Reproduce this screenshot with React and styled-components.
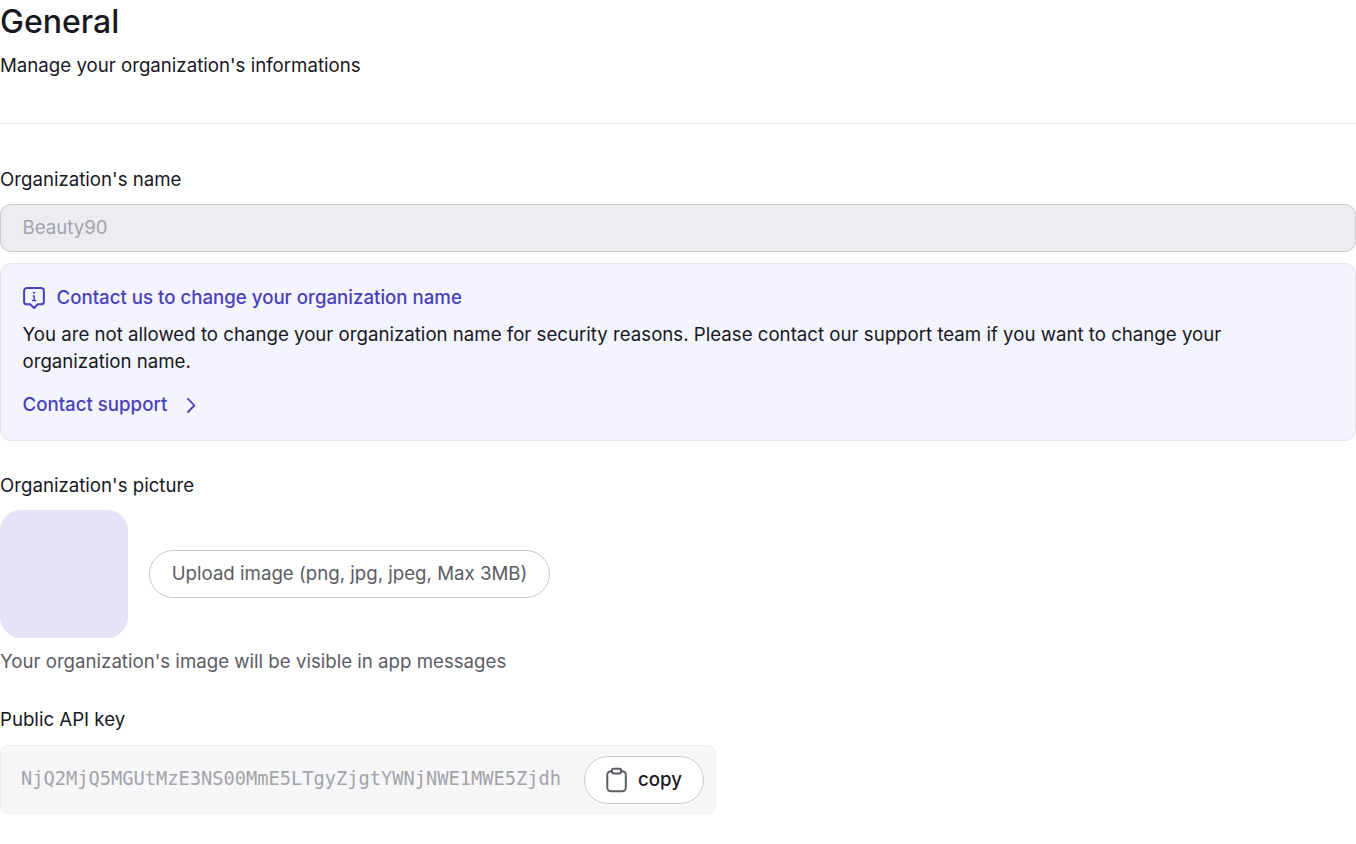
import React from "react";
import styled, { createGlobalStyle } from "styled-components";

const apiKey = "NjQ2MjQ5MGUtMzE3NS00MmE5LTgyZjgtYWNjNWE1MWE5Zjdh";

export default function App() {
  return (
    <Container>
      <GlobalStyle />
      <Header>
        <Title>General</Title>
        <Subtitle>Manage your organization's informations</Subtitle>
      </Header>

      <Section>
        <Label htmlFor="name">Organization's name</Label>
        <NameInput id="name" value="Beauty90" disabled readOnly />
        <Notice>
          <NoticeTitle>
            <InfoIcon />
            Contact us to change your organization name
          </NoticeTitle>
          <NoticeText>
            You are not allowed to change your organization name for security reasons. Please
            contact our support team if you want to change your organization name.
          </NoticeText>
          <SupportLink href="#">
            Contact support
            <ChevronIcon />
          </SupportLink>
        </Notice>
      </Section>

      <Section $top={31}>
        <Label as="div">Organization's picture</Label>
        <PictureRow>
          <Picture />
          <UploadButton>Upload image (png, jpg, jpeg, Max 3MB)</UploadButton>
        </PictureRow>
        <Hint>Your organization's image will be visible in app messages</Hint>
      </Section>

      <Section $top={31}>
        <Label as="div">Public API key</Label>
        <KeyBox>
          <KeyText>{apiKey}</KeyText>
          <CopyButton>
            <ClipboardIcon />
            copy
          </CopyButton>
        </KeyBox>
      </Section>
    </Container>
  );
}

function InfoIcon() {
  return (
    <Icon width="23" height="24" viewBox="0 0 23 24">
      <path d="M4 2.1h14a2.9 2.9 0 0 1 2.9 2.9v10.4a2.9 2.9 0 0 1-2.9 2.9h-3.1L11 22l-3.9-3.7H4a2.9 2.9 0 0 1-2.9-2.9V5A2.9 2.9 0 0 1 4 2.1z" />
      <path d="M10.1 9.9h1.1v4.5M9.7 14.5h3" strokeWidth="1.4" />
      <circle cx="11" cy="6.8" r="1.1" fill="currentColor" stroke="none" />
    </Icon>
  );
}

function ChevronIcon() {
  return (
    <Icon width="12" height="18" viewBox="0 0 12 18">
      <path d="M3 2.8 9.4 9.5 3 16" strokeWidth="1.8" />
    </Icon>
  );
}

function ClipboardIcon() {
  return (
    <Icon width="22" height="26" viewBox="0 0 22 26">
      <path d="M7 4.200H6a3.700 3.700 0 0 0-3.700 3.700v12.700A3.700 3.700 0 0 0 6 24.300h11.100a3.700 3.700 0 0 0 3.700-3.700V7.900a3.700 3.700 0 0 0-3.700-3.700h-1" />
      <rect x="6.900" y="1.700" width="9.300" height="4.700" rx="1.800" />
    </Icon>
  );
}

const GlobalStyle = createGlobalStyle`
  * {
    box-sizing: border-box;
  }
  body {
    margin: 0;
    background: #fff;
    color: #18181f;
    font-family: Inter, "Liberation Sans", sans-serif;
    font-size: 18.67px;
    line-height: 27px;
  }
`;

const Container = styled.main`
  width: 100%;
`;

const Header = styled.header`
  height: 124px;
  border-bottom: 1px solid #ebebef;
`;

const Title = styled.h1`
  margin: 0;
  font-size: 32px;
  font-weight: 500;
  line-height: 43px;
`;

const Subtitle = styled.p`
  margin: 9px 0 0;
`;

const Section = styled.section`
  display: flex;
  flex-direction: column;
  align-items: flex-start;
  margin-top: ${({ $top }) => $top || 42}px;
`;

const Label = styled.label`
  display: block;
  line-height: 27px;
`;

const NameInput = styled.input`
  width: 100%;
  height: 48px;
  margin-top: 11px;
  padding: 0 21.5px 1px;
  border: 1px solid #c9c9cf;
  border-radius: 11px;
  background: #edecf1;
  color: #a3a3a9;
  font: inherit;
`;

const Notice = styled.div`
  width: 100%;
  height: 178px;
  margin-top: 11px;
  padding: 20px 100px 0 21.5px;
  border: 1px solid #e4e4f0;
  border-radius: 11px;
  background: #f3f4fd;
`;

const NoticeTitle = styled.div`
  display: flex;
  align-items: center;
  gap: 11px;
  color: #4b40bd;
  font-weight: 500;
`;

const NoticeText = styled.p`
  margin: 10px 0 0;
`;

const SupportLink = styled.a`
  display: inline-flex;
  align-items: center;
  gap: 18px;
  margin-top: 16px;
  color: #4b40bd;
  font-weight: 500;
  text-decoration: none;
`;

const PictureRow = styled.div`
  display: flex;
  align-items: center;
  gap: 21px;
  margin-top: 11px;
`;

const Picture = styled.div`
  width: 128px;
  height: 128px;
  border-radius: 21px;
  background: #e5e4f7;
`;

const Button = styled.button`
  display: flex;
  align-items: center;
  justify-content: center;
  height: 48px;
  border: 1px solid #c9c9cf;
  border-radius: 24px;
  background: #fff;
  font: inherit;
`;

const UploadButton = styled(Button)`
  width: 401px;
  padding: 0 0 1px;
  color: #5c5c65;
  white-space: nowrap;
`;

const Hint = styled.div`
  margin-top: 10px;
  color: #5c5c65;
`;

const KeyBox = styled.div`
  display: flex;
  align-items: center;
  justify-content: space-between;
  width: 716px;
  height: 69px;
  margin-top: 12px;
  padding: 0 11px 0 20px;
  border: 1px solid #ededf2;
  border-radius: 8px;
  background: #f7f7fa;
`;

const KeyText = styled.code`
  padding-bottom: 2px;
  color: #a3a3a9;
  font-family: "DejaVu Sans Mono", "Liberation Mono", monospace;
  font-size: 18.7px;
`;

const CopyButton = styled(Button)`
  gap: 11px;
  width: 120px;
  padding: 0 1px 0 0;
  color: #18181f;
  font-weight: 500;

  svg {
    color: #5c5c65;
  }
`;

const Icon = styled.svg`
  flex: none;
  fill: none;
  stroke: currentColor;
  stroke-width: 2;
  stroke-linecap: round;
  stroke-linejoin: round;
`;
